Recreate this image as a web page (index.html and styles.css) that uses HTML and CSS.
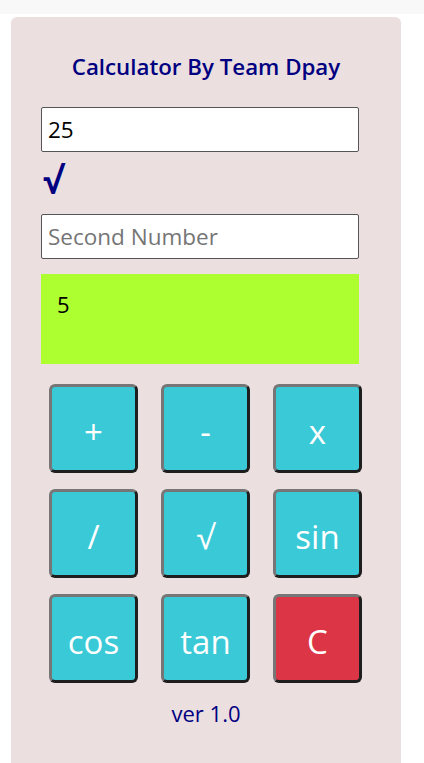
FILE: index.html
```html
<!DOCTYPE html>
<html>
<head>
<meta charset="utf-8">
<link rel="stylesheet" href="styles.css">
</head>
<body>
<div class="topbar"></div>
<div class="card">
  <h1 class="title">Calculator By Team Dpay</h1>
  <input class="field" type="text" value="25">
  <div class="op">√</div>
  <input class="field" type="text" placeholder="Second Number">
  <div class="result">5</div>
  <div class="keys">
    <button class="key">+</button>
    <button class="key">-</button>
    <button class="key">x</button>
    <button class="key">/</button>
    <button class="key">√</button>
    <button class="key">sin</button>
    <button class="key">cos</button>
    <button class="key">tan</button>
    <button class="key key-clear">C</button>
  </div>
  <div class="ver">ver 1.0</div>
</div>
</body>
</html>
```
FILE: styles.css
```css
html, body {
  margin: 0;
  padding: 0;
  background: #ffffff;
  font-family: "Open Sans", "Noto Sans", sans-serif;
}
.topbar {
  height: 14px;
  background: #f8f8f8;
}
.card {
  margin: 3px 0 0 11px;
  width: 390px;
  height: 780px;
  box-sizing: border-box;
  background: #ebdfe0;
  border-radius: 6px;
  padding: 0 0 0 30px;
}
.title {
  margin: 0;
  padding-top: 36px;
  width: 330px;
  text-align: center;
  font-size: 22.3px;
  font-weight: 600;
  color: #000080;
  line-height: 28px;
}
.field {
  display: block;
  box-sizing: border-box;
  width: 318px;
  height: 45px;
  margin: 26px 0 0 0;
  padding: 0 6px;
  border: 1px solid #555;
  border-radius: 2px;
  background: #fff;
  font-family: inherit;
  font-size: 22.5px;
  color: #000;
  outline: none;
}
.field::placeholder {
  color: #757575;
}
.op {
  height: 42px;
  margin-top: 8px;
  padding-left: 2px;
  font-size: 36px;
  font-weight: 700;
  color: #000080;
  line-height: 42px;
}
.op + .field {
  margin-top: 12px;
}
.result {
  box-sizing: border-box;
  width: 318px;
  height: 90px;
  margin-top: 15px;
  padding: 15px 16px;
  background: #adff2f;
  font-size: 22px;
  line-height: 30px;
  color: #000;
}
.keys {
  display: grid;
  grid-template-columns: repeat(3, 89px);
  grid-auto-rows: 89px;
  column-gap: 23px;
  row-gap: 16px;
  margin: 20px 0 0 8px;
}
.key {
  box-sizing: border-box;
  border: 3px solid;
  border-color: #767676 #1e1e1e #1e1e1e #767676;
  border-radius: 6px;
  background: #3ac9d6;
  color: #fff;
  font-family: inherit;
  font-size: 33px;
  padding: 5px 0 0 0;
  cursor: pointer;
}
.key-clear {
  background: #dc3545;
}
.ver {
  width: 330px;
  text-align: center;
  margin-top: 16px;
  font-size: 22px;
  line-height: 28px;
  color: #000080;
}
```
